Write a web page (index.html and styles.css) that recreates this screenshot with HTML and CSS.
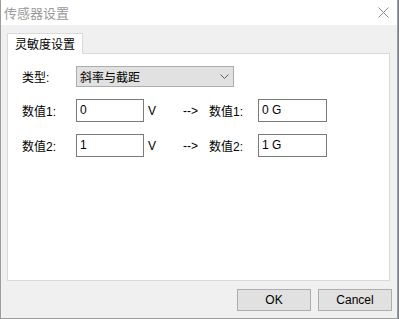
FILE: index.html
```html
<!DOCTYPE html>
<html lang="zh">
<head>
<meta charset="utf-8">
<title>传感器设置</title>
<link rel="stylesheet" href="styles.css">
</head>
<body>
<div class="window">
  <div class="titlebar">
    <span class="title">传感器设置</span>
    <svg class="close" width="11" height="11" viewBox="0 0 11 11"><path d="M0.5 0.5L10.5 10.5M10.5 0.5L0.5 10.5" stroke="#8a8a8a" stroke-width="1" fill="none"/></svg>
  </div>
  <div class="content">
    <div class="tabs"><div class="tab">灵敏度设置</div></div>
    <div class="panel">
      <div class="form">
        <span class="label">类型:</span>
        <div class="combo"><span>斜率与截距</span><svg width="9" height="5" viewBox="0 0 9 5"><path d="M0.5 0.5L4.5 4.5L8.5 0.5" stroke="#606060" stroke-width="1" fill="none"/></svg></div>

        <span class="label">数值1:</span>
        <div class="input">0</div>
        <span class="unit">V</span>
        <span class="arrow">--&gt;</span>
        <span class="label">数值1:</span>
        <div class="input">0 G</div>

        <span class="label">数值2:</span>
        <div class="input">1</div>
        <span class="unit">V</span>
        <span class="arrow">--&gt;</span>
        <span class="label">数值2:</span>
        <div class="input">1 G</div>
      </div>
    </div>
    <div class="buttons">
      <button class="btn">OK</button>
      <button class="btn">Cancel</button>
    </div>
  </div>
</div>
</body>
</html>
```
FILE: styles.css
```css
html, body {
  margin: 0;
  padding: 0;
}
body {
  background: #7a8088;
  width: 399px;
  height: 319px;
  overflow: hidden;
  font-family: "Liberation Sans", "Noto Sans CJK SC", sans-serif;
  font-size: 12px;
  color: #000;
}
.window {
  box-sizing: border-box;
  width: 398px;
  height: 319px;
  border-left: 1px solid #9c9c9c;
  border-right: 1px solid #9c9c9c;
  border-bottom: 1px solid #9c9c9c;
  background: #f0f0f0;
  display: flex;
  flex-direction: column;
}
.titlebar {
  height: 25px;
  background: #fff;
  display: flex;
  align-items: center;
  justify-content: space-between;
  padding: 0 8px 0 3px;
}
.title {
  font-family: "Noto Sans CJK SC", sans-serif;
  font-size: 13px;
  color: #9a9a9a;
  line-height: 25px;
}
.close {
  display: block;
  margin-top: -1px;
}
.content {
  flex: 1;
  padding: 8px 5px 0 6px;
  display: flex;
  flex-direction: column;
}
.tabs {
  display: flex;
  height: 20px;
}
.tab {
  position: relative;
  z-index: 1;
  box-sizing: border-box;
  width: 76px;
  height: 21px;
  background: #fff;
  border: 1px solid #d9d9d9;
  border-bottom: none;
  font-family: "Noto Sans CJK SC", sans-serif;
  font-size: 12px;
  line-height: 19px;
  text-align: center;
}
.panel {
  box-sizing: border-box;
  width: 383px;
  height: 228px;
  background: #fff;
  border: 1px solid #d9d9d9;
}
.form {
  display: grid;
  grid-template-columns: 54px 68px 39px 26px 49px 69px;
  grid-template-rows: 21px 23px 23px;
  row-gap: 12px;
  padding: 12px 0 0 14px;
  align-items: center;
}
.label {
  font-size: 12px;
  white-space: nowrap;
}
.combo {
  grid-column: 2 / -1;
  justify-self: start;
  box-sizing: border-box;
  width: 158px;
  height: 21px;
  background: #e1e1e1;
  border: 1px solid #adadad;
  display: flex;
  align-items: center;
  justify-content: space-between;
  padding: 0 4px 0 3px;
  font-family: "Noto Sans CJK SC", sans-serif;
  font-size: 12px;
}
.combo svg {
  display: block;
}
.input {
  box-sizing: border-box;
  height: 23px;
  background: #fff;
  border: 1px solid #7a7a7a;
  padding-left: 3px;
  line-height: 20px;
  font-size: 12px;
}
.unit {
  padding-left: 4px;
}
.arrow {
  white-space: nowrap;
}
.buttons {
  display: flex;
  justify-content: flex-end;
  gap: 7px;
  margin-top: 8px;
}
.btn {
  box-sizing: border-box;
  width: 74px;
  height: 22px;
  margin: 0;
  padding: 0;
  background: #e1e1e1;
  border: 1px solid #adadad;
  border-radius: 0;
  font-family: "Liberation Sans", sans-serif;
  font-size: 12px;
  color: #000;
}
```
